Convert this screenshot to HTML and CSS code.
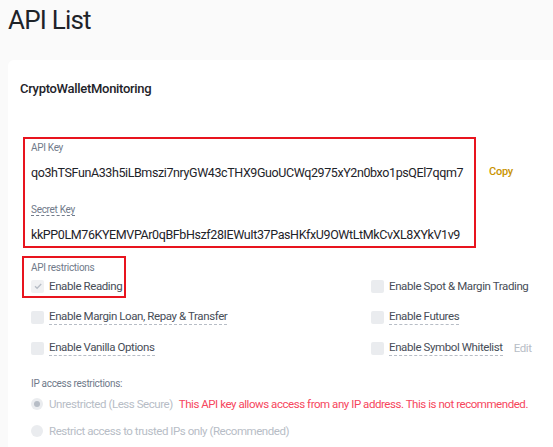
FILE: index.html
```html
<!DOCTYPE html>
<html>
<head>
<meta charset="utf-8">
<link rel="stylesheet" href="styles.css">
</head>
<body>
<div class="page">
  <h1 class="title">API List</h1>
  <div class="card">
    <div class="card-head">CryptoWalletMonitoring</div>
    <div class="keys-row">
      <div class="keys-box">
        <div class="field">
          <div class="label">API Key</div>
          <div class="value">qo3hTSFunA33h5iLBmszi7nryGW43cTHX9GuoUCWq2975xY2n0bxo1psQEl7qqm7</div>
        </div>
        <div class="field field-secret">
          <div class="label"><span class="dashed">Secret Key</span></div>
          <div class="value">kkPP0LM76KYEMVPAr0qBFbHszf28IEWuIt37PasHKfxU9OWtLtMkCvXL8XYkV1v9</div>
        </div>
      </div>
      <span class="copy">Copy</span>
    </div>
    <div class="restrictions">
      <div class="highlight"></div>
      <div class="label">API restrictions</div>
      <div class="grid">
        <div class="opt"><span class="cb checked"><svg viewBox="0 0 12 12" width="12" height="12"><path d="M3 6.2l2.1 2.1L9.2 4" fill="none" stroke="#b7bdc6" stroke-width="1.3"/></svg></span><span class="opt-text">Enable Reading</span></div>
        <div class="opt"><span class="cb"></span><span class="opt-text">Enable Spot &amp; Margin Trading</span></div>
        <div class="opt"><span class="cb"></span><span class="opt-text dashed">Enable Margin Loan, Repay &amp; Transfer</span></div>
        <div class="opt"><span class="cb"></span><span class="opt-text dashed">Enable Futures</span></div>
        <div class="opt"><span class="cb"></span><span class="opt-text dashed">Enable Vanilla Options</span></div>
        <div class="opt"><span class="cb"></span><span class="opt-text dashed">Enable Symbol Whitelist</span><span class="edit">Edit</span></div>
      </div>
    </div>
    <div class="ip">
      <div class="label">IP access restrictions:</div>
      <div class="radio-row"><span class="radio on"></span><span class="radio-text">Unrestricted (Less Secure)</span><span class="warn">This API key allows access from any IP address. This is not recommended.</span></div>
      <div class="radio-row"><span class="radio"></span><span class="radio-text">Restrict access to trusted IPs only (Recommended)</span></div>
    </div>
  </div>
</div>
</body>
</html>
```

FILE: styles.css
```css
html, body {
  margin: 0;
  padding: 0;
  background: #fafafa;
  overflow: hidden;
  font-family: Roboto, "Liberation Sans", sans-serif;
  color: #1e2329;
}
.page {
  padding: 0 0 0 8px;
}
.title {
  margin: 0;
  font-size: 26px;
  letter-spacing: -0.8px;
  font-weight: 400;
  line-height: 40px;
  height: 60px;
  color: #1e2329;
}
.card {
  background: #fff;
  border-radius: 6px 6px 0 0;
  margin-right: -20px;
  padding: 0 12px;
  height: 387px;
  box-sizing: border-box;
}
.card-head {
  height: 57px;
  line-height: 57px;
  font-size: 13px;
  letter-spacing: -0.3px;
  font-weight: 500;
}
.keys-row {
  display: flex;
  align-items: flex-start;
  margin-top: 20px;
}
.keys-box {
  margin-left: 3px;
  border: 2px solid #e8141e;
  padding: 1px 11px 1px 6px;
}
.label {
  font-size: 10px;
  letter-spacing: -0.3px;
  line-height: 16px;
  color: #707a8a;
  white-space: nowrap;
}
.value {
  font-size: 12.5px;
  letter-spacing: -0.4px;
  line-height: 20px;
  margin-top: 7px;
  color: #1e2329;
  white-space: nowrap;
}
.field-secret {
  margin-top: 19px;
}
.dashed {
  border-bottom: 1px dashed #707a8a;
}
.copy {
  margin-left: 13px;
  margin-top: 28px;
  font-size: 11px;
  letter-spacing: -0.3px;
  font-weight: 500;
  color: #c99400;
}
.restrictions {
  position: relative;
  margin-top: 8px;
  padding-left: 11px;
  padding-top: 4px;
}
.highlight {
  position: absolute;
  left: 2px;
  top: 0;
  width: 100px;
  height: 38px;
  border: 2px solid #e8141e;
}
.grid {
  display: grid;
  grid-template-columns: 340px 1fr;
  grid-auto-rows: 20px;
  row-gap: 11px;
}
.opt {
  display: flex;
  align-items: center;
  font-size: 11.5px;
  letter-spacing: -0.4px;
  color: #474d57;
  white-space: nowrap;
}
.cb {
  width: 13px;
  height: 13px;
  border-radius: 2px;
  background: #eaecef;
  margin-right: 5px;
  display: flex;
  align-items: center;
  justify-content: center;
  flex: none;
}
.cb.checked {
  background: #f0f1f3;
}
.opt-text.dashed {
  border-bottom: 1px dashed #b7bdc6;
  line-height: 15px;
}
.edit {
  margin-left: 11px;
  color: #b7bdc6;
}
.ip {
  padding-left: 11px;
  margin-top: 18px;
  display: flex;
  flex-direction: column;
  gap: 7px;
}
.ip .label {
  margin-bottom: -5px;
}
.radio-row {
  display: flex;
  align-items: center;
  height: 20px;
  font-size: 11.5px;
  letter-spacing: -0.45px;
  white-space: nowrap;
}
.radio {
  width: 12px;
  height: 12px;
  border-radius: 50%;
  background: #eaecef;
  margin-right: 6px;
  display: flex;
  align-items: center;
  justify-content: center;
  flex: none;
}
.radio.on::after {
  content: "";
  width: 6px;
  height: 6px;
  border-radius: 50%;
  background: #b7bdc6;
}
.radio-text {
  color: #b7bdc6;
}
.warn {
  margin-left: 6px;
  color: #f6465d;
}
```
